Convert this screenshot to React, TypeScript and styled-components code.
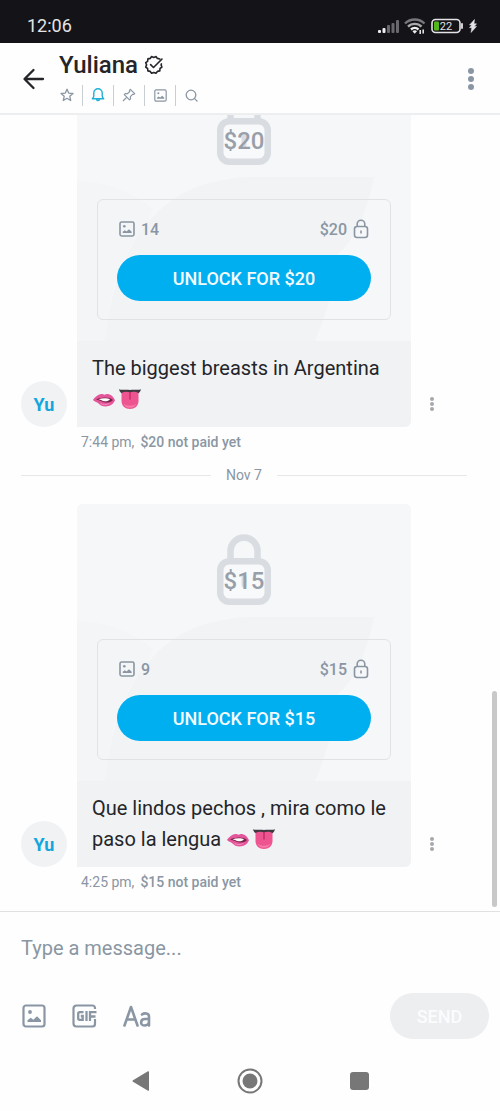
import React from "react";
import styled, { createGlobalStyle } from "styled-components";

const color = {
  ink: "#242529",
  muted: "#8a96a3",
  blue: "#00aff0",
  panel: "#f0f2f4",
  panelLight: "#f5f7f9",
  line: "#e6e8ea",
};

const GlobalStyle = createGlobalStyle`
  *, *::before, *::after { box-sizing: border-box; }
  body {
    margin: 0;
    background: #fefefe;
    color: ${color.ink};
    font-family: Roboto, "Liberation Sans", sans-serif;
  }
  button { border: 0; padding: 0; background: none; font: inherit; color: inherit; cursor: pointer; }
  h1, p { margin: 0; }
  svg { display: block; flex: none; }
`;

const Screen = styled.div`
  display: flex;
  flex-direction: column;
  height: 100vh;
`;

const StatusBar = styled.div`
  display: flex;
  align-items: center;
  justify-content: space-between;
  height: 43px;
  padding: 8px 23px 0 27px;
  background: #141318;
  color: #e4e4e6;
  font-size: 18px;
`;

const StatusIcons = styled.div`
  display: flex;
  align-items: center;
  gap: 5px;
`;

const Header = styled.header`
  display: flex;
  align-items: center;
  height: 72px;
  padding: 2px 10px 0 22px;
  border-bottom: 2px solid #eceeef;
`;

const Title = styled.div`
  flex: 1;
  margin-left: 13px;
  padding-bottom: 2px;
`;

const NameRow = styled.div`
  display: flex;
  align-items: center;
  gap: 6px;
  height: 28px;
`;

const Name = styled.h1`
  font-size: 24px;
  line-height: 28px;
  font-weight: 500;
`;

const Tools = styled.div`
  display: flex;
  align-items: center;
  margin-top: 6px;
`;

const Tool = styled.button<{ $active?: boolean }>`
  display: flex;
  align-items: center;
  justify-content: center;
  width: 31px;
  height: 21px;
  color: ${(p) => (p.$active ? "#1fb0d8" : color.muted)};
  & + & { border-left: 1px solid #c9ced3; }
  &:first-child { width: 23px; padding-right: 8px; }
`;

const MoreButton = styled.button`
  display: flex;
  align-items: center;
  justify-content: center;
  width: 38px;
  height: 44px;
  color: ${color.muted};
`;

const Chat = styled.main`
  position: relative;
  flex: 1;
  min-height: 0;
  overflow: hidden;
  display: flex;
  flex-direction: column;
  justify-content: flex-end;
  padding: 0 33px 14px 21px;
`;

const ScrollThumb = styled.div`
  position: absolute;
  right: 3px;
  bottom: 4px;
  width: 5px;
  height: 216px;
  border-radius: 3px;
  background: #c8c8c8;
`;

const MessageRow = styled.article`
  display: grid;
  grid-template-columns: 46px 1fr 40px;
  column-gap: 10px;
  padding-right: 6px;
  flex: none;
`;

const Avatar = styled.div`
  align-self: end;
  display: flex;
  align-items: center;
  justify-content: center;
  width: 46px;
  height: 46px;
  border-radius: 50%;
  background: ${color.panel};
  color: #14a5dc;
  font-size: 18px;
  font-weight: 700;
`;

const Bubble = styled.div`
  overflow: hidden;
  border-radius: 6px 6px 6px 0;
  background: ${color.panel};
`;

const RowMenu = styled.button`
  align-self: end;
  display: flex;
  align-items: center;
  justify-content: center;
  width: 22px;
  height: 46px;
  color: #a5a9ae;
`;

const Locked = styled.div`
  position: relative;
  display: flex;
  flex-direction: column;
  align-items: center;
  padding: 30px 20px 21px;
  background: ${color.panelLight};
`;

const Backdrop = styled.svg`
  position: absolute;
  inset: 0;
  width: 100%;
  height: 100%;
`;

const LockBadge = styled.div`
  position: relative;
  width: 54px;
  height: 71px;
  color: #d9dce0;
`;

const LockPrice = styled.span`
  position: absolute;
  inset: 27px 0 0 0;
  display: flex;
  align-items: center;
  justify-content: center;
  height: 40px;
  color: #989fa9;
  font-size: 24px;
  font-weight: 500;
`;

const Offer = styled.div`
  position: relative;
  align-self: stretch;
  margin-top: 34px;
  padding: 18px 19px;
  border: 1px solid #e0e3e6;
  border-radius: 6px;
`;

const OfferInfo = styled.div`
  display: flex;
  justify-content: space-between;
  height: 22px;
  margin-bottom: 15px;
  padding: 0 2px;
  color: ${color.muted};
  font-size: 16px;
  font-weight: 500;
`;

const InfoItem = styled.span`
  display: flex;
  align-items: center;
  gap: 6px;
`;

const UnlockButton = styled.button`
  display: block;
  width: 100%;
  height: 46px;
  border-radius: 23px;
  background: ${color.blue};
  color: #f4fbfe;
  font-size: 18px;
  font-weight: 500;
`;

const MessageText = styled.p`
  padding: 12px 15px;
  font-size: 20px;
  line-height: 31px;
`;

const Emoji = styled.svg`
  display: inline-block;
  vertical-align: -4px;
  margin-right: 2px;
`;

const Meta = styled.p`
  grid-column: 2;
  padding-left: 4px;
  color: ${color.muted};
  font-size: 14px;
  line-height: 30px;
`;

const Unpaid = styled.strong`
  margin-left: 6px;
  font-weight: 500;
`;

const DateDivider = styled.div`
  display: flex;
  align-items: center;
  gap: 15px;
  flex: none;
  height: 36px;
  margin-bottom: 11px;
  color: ${color.muted};
  font-size: 14px;
  &::before, &::after {
    content: "";
    flex: 1;
    height: 1px;
    background: ${color.line};
  }
`;

const Composer = styled.form`
  border-top: 1px solid #dfe1e3;
`;

const MessageInput = styled.input`
  display: block;
  width: 100%;
  height: 72px;
  padding: 0 21px;
  border: 0;
  outline: 0;
  background: none;
  color: ${color.ink};
  font: 20px Roboto, "Liberation Sans", sans-serif;
  &::placeholder { color: ${color.muted}; opacity: 1; }
`;

const ComposerBar = styled.div`
  display: flex;
  align-items: center;
  gap: 26px;
  height: 64px;
  padding: 0 11px 0 22px;
  color: ${color.muted};
`;

const SendButton = styled.button`
  width: 99px;
  height: 46px;
  margin-left: auto;
  border-radius: 23px;
  background: #eceef0;
  color: #fcfcfd;
  font-size: 18px;
  font-weight: 500;
`;

const SystemNav = styled.nav`
  display: flex;
  align-items: center;
  justify-content: center;
  gap: 83px;
  height: 63px;
  padding-top: 2px;
  color: #777;
`;

const NavButton = styled.button`
  display: flex;
  justify-content: center;
  width: 26px;
`;

function Dots({ r, gap }: { r: number; gap: number }) {
  const size = gap * 2 + r * 2;
  return (
    <svg width={r * 2} height={size} fill="currentColor" aria-hidden="true">
      {[0, 1, 2].map((i) => (
        <circle key={i} cx={r} cy={r + gap * i} r={r} />
      ))}
    </svg>
  );
}

function PhotoIcon({ size, stroke = 2 }: { size: number; stroke?: number }) {
  return (
    <svg width={size} height={size} viewBox="0 0 24 24" aria-hidden="true">
      <rect x="1.5" y="1.5" width="21" height="21" rx="2.5" fill="none" stroke="currentColor" strokeWidth={stroke} />
      <circle cx="8" cy="8" r="1.9" fill="currentColor" />
      <path d="M5.500 18v-1.700L8.700 13.800l2.600 2 3.700-3.500 4 3.900V18z" fill="currentColor" />
    </svg>
  );
}

function SmallLock() {
  return (
    <svg width="16" height="20" viewBox="0 0 16 20" fill="none" stroke="currentColor" strokeWidth="1.6" aria-hidden="true">
      <rect x="1.5" y="7.5" width="13" height="11" rx="2.5" />
      <path d="M4.2 7.5V5a3.8 3.8 0 0 1 7.6 0v2.500M8 11.500v3" />
    </svg>
  );
}

function LipsEmoji() {
  return (
    <Emoji width="24" height="20" viewBox="0 0 24 20" role="img" aria-label="biting lip">
      <path d="M1 9.800C3.500 6.500 6.500 4.200 9.500 4c1.300-.1 1.900.7 3 .7 1.300 0 2-.9 3.500-.6 3.300.5 5.500 3 7 6.200-1.500 3.800-5 6.200-9.500 6.200-5.500 0-6-3-9.500-4.500-1.300-.6-2.500-1-3-2.200z" fill="#e5559a" />
      <path d="M4 9.500c3-1.200 6-1.900 9-1.900 3.200 0 6 .8 8 2.400-2 2.200-4.800 2.800-7.500 2.500-3.500-.4-5.500-2.300-9.500-3z" fill="#7a2348" />
      <path d="M6.500 9.200c3.500-1.100 8.500-1.300 11.500 0-1.300 1.800-3.500 2.200-5.500 2-2.200-.2-3.500-1.500-6-2z" fill="#fff" />
      <path d="M8.500 13.500c2.500 1.500 6 1.500 9-.2" fill="none" stroke="#f48cba" strokeWidth="1" />
    </Emoji>
  );
}

function TongueEmoji() {
  return (
    <Emoji width="24" height="22" viewBox="0 0 24 22" role="img" aria-label="tongue">
      <path d="M1 1.200C4 2.500 8 1 12 2c4-1 8 .5 11-.8-.6 2.800-2.800 4.800-5.500 5H6.500C3.800 6 1.600 4 1 1.200z" fill="#3f3940" />
      <path d="M3.500 5C6 3.600 9.500 3.400 12 4.400c2.500-1 6-.8 8.500.6v8c0 5-3.800 8-8.500 8s-8.500-3-8.500-8z" fill="#ee5590" />
      <path d="M5.500 15.500c2.500 3 10.500 3 13 0-.8 2.700-3.400 4.300-6.500 4.300s-5.700-1.600-6.500-4.300z" fill="#f77aa9" />
      <path d="M12 4.400v6.500" stroke="#c42c68" strokeWidth="1.500" strokeLinecap="round" />
    </Emoji>
  );
}

function LockedMedia({ price, count }: { price: string; count: number }) {
  return (
    <Locked>
      <Backdrop viewBox="0 0 335 277" preserveAspectRatio="none" aria-hidden="true">
        <path d="M0 117c28 1 55 10 76 28l-8 18C45 188 32 225 28 277H0z" fill="#f3f5f7" />
        <path d="M28 277C34 225 48 180 80 149c28-27 62-36 103-36h115c-6 27-15 56-31 72-10 10-15 14-24 20 10 0 15 0 18 1-4 23-14 50-22 71z" fill="#f1f3f5" />
      </Backdrop>
      <LockBadge>
        <svg width="54" height="71" viewBox="0 0 54 71" fill="none" stroke="currentColor" aria-hidden="true">
          <rect x="3.250" y="27.250" width="47.500" height="40.500" rx="9" strokeWidth="6.500" fill="#f8f9fb" />
          <path d="M13.500 27V17a13.500 13.500 0 0 1 27 0v10" strokeWidth="6.500" />
          <path d="M27 43v8" strokeWidth="5" strokeLinecap="round" />
        </svg>
        <LockPrice>{price}</LockPrice>
      </LockBadge>
      <Offer>
        <OfferInfo>
          <InfoItem><PhotoIcon size={16} stroke={2.4} />{count}</InfoItem>
          <InfoItem>{price}<SmallLock /></InfoItem>
        </OfferInfo>
        <UnlockButton type="button">UNLOCK FOR {price}</UnlockButton>
      </Offer>
    </Locked>
  );
}

function Message({ price, count, time, children }: { price: string; count: number; time: string; children: React.ReactNode }) {
  return (
    <MessageRow>
      <Avatar>Yu</Avatar>
      <Bubble>
        <LockedMedia price={price} count={count} />
        <MessageText>{children}</MessageText>
      </Bubble>
      <RowMenu type="button" aria-label="Message options"><Dots r={2} gap={5} /></RowMenu>
      <Meta>{time},<Unpaid>{price} not paid yet</Unpaid></Meta>
    </MessageRow>
  );
}

export default function App() {
  return (
    <Screen>
      <GlobalStyle />
      <StatusBar>
        <span>12:06</span>
        <StatusIcons>
          <svg width="21" height="14" viewBox="0 0 21 14" aria-hidden="true">
            {[3, 5, 8, 10, 13].map((h, i) => (
              <rect key={i} x={i * 4.500} y={14 - h} width="3" height={h} rx="1" fill={i < 2 ? "#eee" : "#69686d"} />
            ))}
          </svg>
          <svg width="22" height="18" viewBox="0 0 22 18" fill="none" strokeWidth="2.400" aria-hidden="true">
            <path d="M1 6.500a14 14 0 0 1 19.500 0" stroke="#78777c" />
            <path d="M4 9.700a9.500 9.500 0 0 1 13.500 0" stroke="#aaa" />
            <path d="M7 12.500a5.500 5.500 0 0 1 7.500 0" stroke="#eee" />
            <path d="M8.500 14.200a3 3 0 0 1 4.500 0L10.700 16.800z" fill="#eee" />
            <path d="M16.200 13v4M19.200 12.500v4" stroke="#eee" strokeWidth="1.500" />
          </svg>
          <svg width="33" height="16" viewBox="0 0 33 16" aria-hidden="true">
            <rect x="1" y="1.500" width="28" height="13" rx="3.500" fill="none" stroke="#e4e4e6" strokeWidth="1.600" />
            <rect x="3" y="3.500" width="5" height="9" rx="1" fill="#55b71c" />
            <path d="M31 6v4" stroke="#e4e4e6" strokeWidth="1.800" strokeLinecap="round" />
            <text x="15" y="12" fontSize="11" fill="#e4e4e6" textAnchor="middle">22</text>
          </svg>
          <svg width="8" height="14" viewBox="0 0 8 14" fill="#e4e4e6" stroke="#e4e4e6" strokeWidth=".5" strokeLinejoin="round" aria-hidden="true">
            <path d="M5.500.5.500 6h2.300L.5 8.700h2.300L2 13.500l5.500-6H5.300l2.200-2.700H5z" />
          </svg>
        </StatusIcons>
      </StatusBar>

      <Header>
        <button type="button" aria-label="Back">
          <svg width="24" height="24" viewBox="0 0 24 24" fill="none" stroke={color.ink} strokeWidth="2.300" strokeLinecap="round" strokeLinejoin="round" aria-hidden="true">
            <path d="M21 12H3M11.500 3 2.500 12l9 9" />
          </svg>
        </button>
        <Title>
          <NameRow>
            <Name>Yuliana</Name>
            <svg width="20" height="20" viewBox="0 0 20 20" fill="none" stroke={color.ink} strokeWidth="1.600" strokeLinecap="round" strokeLinejoin="round" aria-label="Verified">
              <path d="M15.800 4 13.400 3.400 12 1.600l-2.200.8-2.200-.8-1.400 1.800-2.300.5-.3 2.400L1.700 7.700l.9 2.200-.9 2.200 1.900 1.400.3 2.400 2.300.5 1.400 1.800 2.200-.8 2.200.8 1.400-1.800 2.400-.5.200-2.400 1.900-1.400-.8-2.200.3-1" />
              <path d="m6.600 9.600 2.900 2.900 8.500-8.500" />
            </svg>
          </NameRow>
          <Tools>
            <Tool type="button" aria-label="Favorite">
              <svg width="14" height="14" viewBox="0 0 14 14" fill="none" stroke="currentColor" strokeWidth="1.300" strokeLinejoin="round"><path d="m7 1.200 1.700 3.900 4.300.4-3.200 2.800.9 4.200L7 10.300l-3.700 2.200.9-4.200L1 5.500l4.300-.4z" /></svg>
            </Tool>
            <Tool type="button" aria-label="Notifications" $active>
              <svg width="14" height="14" viewBox="0 0 14 14" fill="none" stroke="currentColor" strokeWidth="1.400" strokeLinejoin="round"><path d="M1.300 10.800c1-.8 1.500-1.600 1.500-3V5a4.200 4.200 0 0 1 8.400 0v2.800c0 1.400.5 2.200 1.500 3zM5.500 11.500a1.600 1.600 0 0 0 3 0" /></svg>
            </Tool>
            <Tool type="button" aria-label="Pin">
              <svg width="14" height="14" viewBox="0 0 14 14" fill="none" stroke="currentColor" strokeWidth="1.200" strokeLinejoin="round"><path d="m8.300 1.300 4.400 4.400-1.300.8-.8-.1-2.200 2.200.1 2.200-1 1L2.300 6.600l1-1 2.200.1 2.200-2.200-.2-1zM4.800 9.200 1 13" /></svg>
            </Tool>
            <Tool type="button" aria-label="Media"><PhotoIcon size={13} stroke={2.2} /></Tool>
            <Tool type="button" aria-label="Search">
              <svg width="13" height="13" viewBox="0 0 13 13" fill="none" stroke="currentColor" strokeWidth="1.300" strokeLinecap="round"><circle cx="6" cy="6" r="4.800" /><path d="m9.600 9.600 2.500 2.500" /></svg>
            </Tool>
          </Tools>
        </Title>
        <MoreButton type="button" aria-label="More options"><Dots r={3} gap={8} /></MoreButton>
      </Header>

      <Chat>
        <Message price="$20" count={14} time="7:44 pm">
          The biggest breasts in Argentina <LipsEmoji /><TongueEmoji />
        </Message>
        <DateDivider>Nov 7</DateDivider>
        <Message price="$15" count={9} time="4:25 pm">
          Que lindos pechos , mira como le paso la lengua <LipsEmoji /><TongueEmoji />
        </Message>
        <ScrollThumb />
      </Chat>

      <Composer onSubmit={(e) => e.preventDefault()}>
        <MessageInput type="text" placeholder="Type a message..." aria-label="Type a message" />
        <ComposerBar>
          <button type="button" aria-label="Add photo"><PhotoIcon size={24} stroke={2.2} /></button>
          <button type="button" aria-label="Add GIF">
            <svg width="25" height="24" viewBox="0 0 25 24" fill="none" stroke="currentColor" strokeWidth="2.200" aria-hidden="true">
              <path d="M23 5V4a2.500 2.500 0 0 0-2.500-2.500h-16A3 3 0 0 0 1.500 4.500v15a3 3 0 0 0 3 3h16A2.500 2.500 0 0 0 23 20v-5" />
              <path d="M11.500 8.200H7.700A1.500 1.500 0 0 0 6.200 9.700v4.600a1.500 1.500 0 0 0 1.500 1.500h3V12H8.800M14.500 7v10M18 17V8.200H24.500M18 12.500h5.500" strokeWidth="2.300" />
            </svg>
          </button>
          <button type="button" aria-label="Text format">
            <svg width="28" height="22" viewBox="0 0 28 22" fill="none" stroke="currentColor" strokeWidth="2.600" strokeLinecap="round" strokeLinejoin="round" aria-hidden="true">
              <path d="M1.500 20.500 8 2l6.500 18.500M3.500 14.500h9M19 9.500c2-1.600 7-1.800 7 2v9M26 14h-4c-5 0-5 6.500-.8 6.500 2.500 0 4.800-1.500 4.800-4" />
            </svg>
          </button>
          <SendButton type="submit">SEND</SendButton>
        </ComposerBar>
      </Composer>

      <SystemNav aria-label="System navigation">
        <NavButton type="button" aria-label="Back">
          <svg width="18" height="22" viewBox="0 0 18 22" fill="currentColor"><path d="M16 1.200a.8.8 0 0 1 1 .8v18a.8.8 0 0 1-1 .8L1 11.800a1 1 0 0 1 0-1.600z" /></svg>
        </NavButton>
        <NavButton type="button" aria-label="Home">
          <svg width="26" height="26" viewBox="0 0 26 26"><circle cx="13" cy="13" r="11.500" fill="none" stroke="currentColor" strokeWidth="2" /><circle cx="13" cy="13" r="7.500" fill="currentColor" /></svg>
        </NavButton>
        <NavButton type="button" aria-label="Recent apps">
          <svg width="19" height="18" viewBox="0 0 19 18" fill="currentColor"><rect width="19" height="18" rx="3" /></svg>
        </NavButton>
      </SystemNav>
    </Screen>
  );
}
